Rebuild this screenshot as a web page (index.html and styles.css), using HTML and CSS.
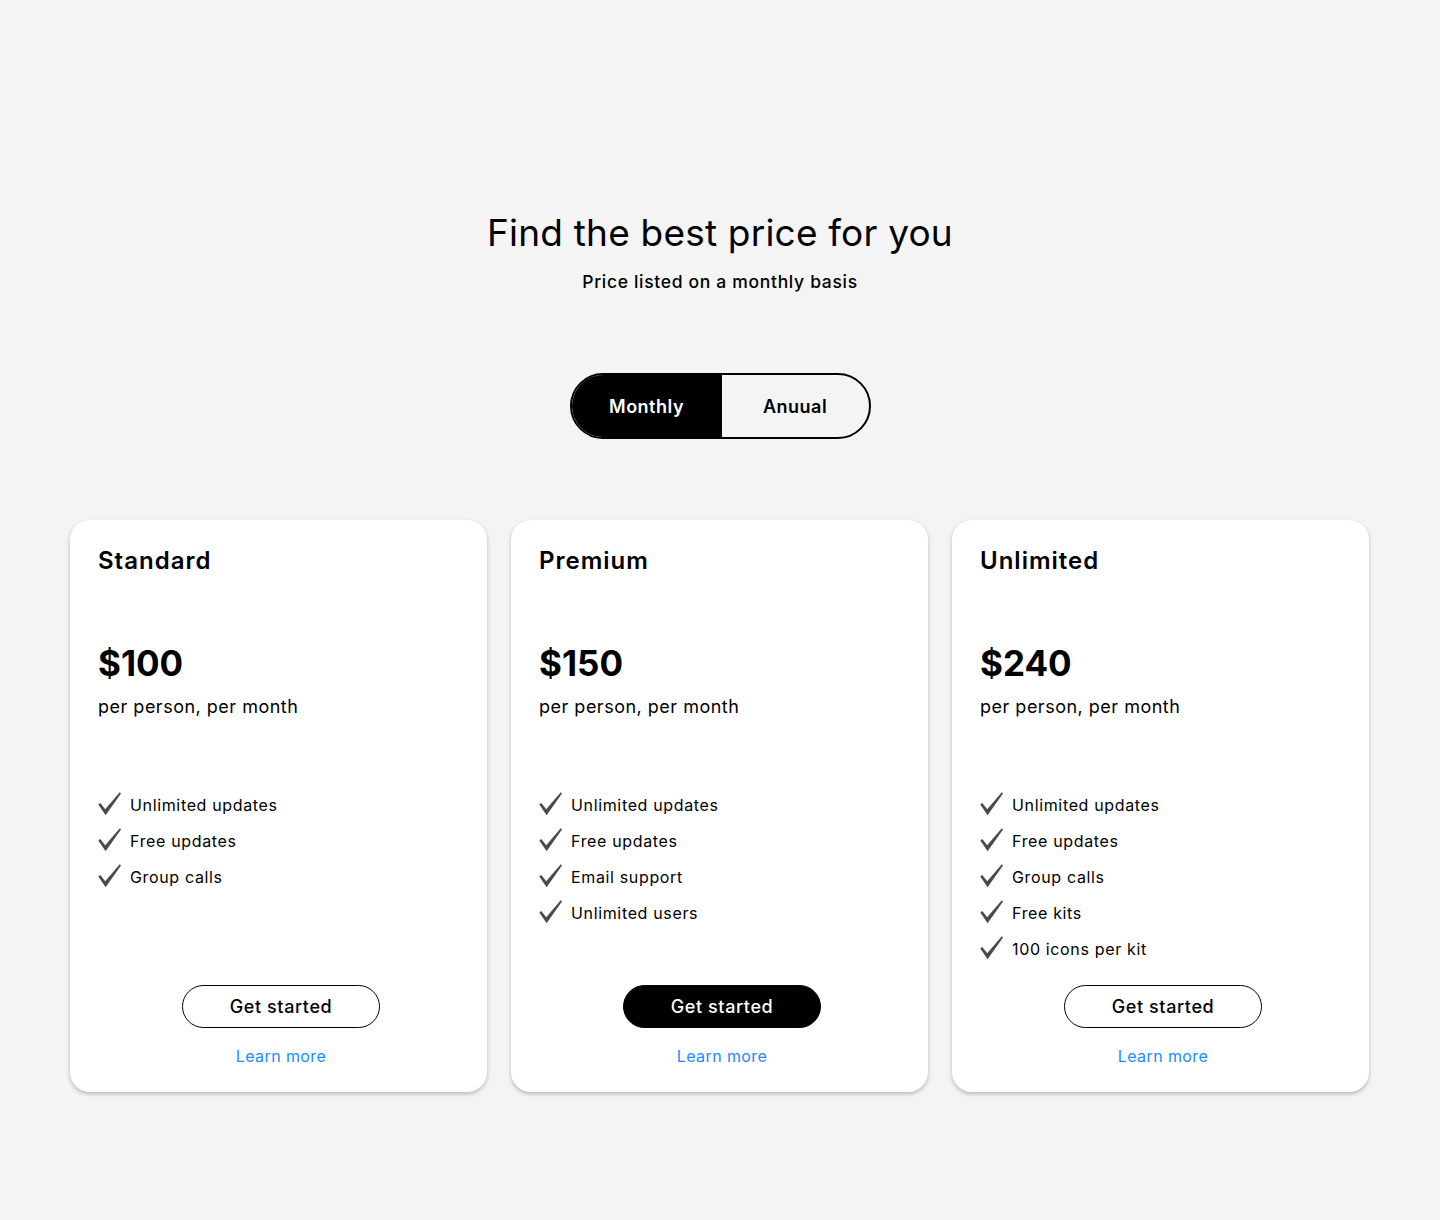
FILE: index.html
```html
<!DOCTYPE html>
<html lang="en">
<head>
<meta charset="utf-8">
<title>Pricing</title>
<link rel="stylesheet" href="styles.css">
</head>
<body>
<main class="page">
  <header class="intro">
    <h1 class="title">Find the best price for you</h1>
    <p class="subtitle">Price listed on a monthly basis</p>
  </header>

  <div class="toggle">
    <button class="toggle-btn active">Monthly</button>
    <button class="toggle-btn">Anuual</button>
  </div>

  <section class="cards">
    <article class="card">
      <h2 class="plan">Standard</h2>
      <div class="price">$100</div>
      <div class="per">per person, per month</div>
      <ul class="features">
        <li><svg class="check" viewBox="0 0 24 24"><path d="M0.3 12.6L2.3 11L7.2 17.2L21.8 0.3L23 1.5L7.6 23.2Z"/></svg>Unlimited updates</li>
        <li><svg class="check" viewBox="0 0 24 24"><path d="M0.3 12.6L2.3 11L7.2 17.2L21.8 0.3L23 1.5L7.6 23.2Z"/></svg>Free updates</li>
        <li><svg class="check" viewBox="0 0 24 24"><path d="M0.3 12.6L2.3 11L7.2 17.2L21.8 0.3L23 1.5L7.6 23.2Z"/></svg>Group calls</li>
      </ul>
      <div class="actions">
        <button class="cta">Get started</button>
        <a class="learn" href="#">Learn more</a>
      </div>
    </article>

    <article class="card">
      <h2 class="plan">Premium</h2>
      <div class="price">$150</div>
      <div class="per">per person, per month</div>
      <ul class="features">
        <li><svg class="check" viewBox="0 0 24 24"><path d="M0.3 12.6L2.3 11L7.2 17.2L21.8 0.3L23 1.5L7.6 23.2Z"/></svg>Unlimited updates</li>
        <li><svg class="check" viewBox="0 0 24 24"><path d="M0.3 12.6L2.3 11L7.2 17.2L21.8 0.3L23 1.5L7.6 23.2Z"/></svg>Free updates</li>
        <li><svg class="check" viewBox="0 0 24 24"><path d="M0.3 12.6L2.3 11L7.2 17.2L21.8 0.3L23 1.5L7.6 23.2Z"/></svg>Email support</li>
        <li><svg class="check" viewBox="0 0 24 24"><path d="M0.3 12.6L2.3 11L7.2 17.2L21.8 0.3L23 1.5L7.6 23.2Z"/></svg>Unlimited users</li>
      </ul>
      <div class="actions">
        <button class="cta dark">Get started</button>
        <a class="learn" href="#">Learn more</a>
      </div>
    </article>

    <article class="card">
      <h2 class="plan">Unlimited</h2>
      <div class="price">$240</div>
      <div class="per">per person, per month</div>
      <ul class="features">
        <li><svg class="check" viewBox="0 0 24 24"><path d="M0.3 12.6L2.3 11L7.2 17.2L21.8 0.3L23 1.5L7.6 23.2Z"/></svg>Unlimited updates</li>
        <li><svg class="check" viewBox="0 0 24 24"><path d="M0.3 12.6L2.3 11L7.2 17.2L21.8 0.3L23 1.5L7.6 23.2Z"/></svg>Free updates</li>
        <li><svg class="check" viewBox="0 0 24 24"><path d="M0.3 12.6L2.3 11L7.2 17.2L21.8 0.3L23 1.5L7.6 23.2Z"/></svg>Group calls</li>
        <li><svg class="check" viewBox="0 0 24 24"><path d="M0.3 12.6L2.3 11L7.2 17.2L21.8 0.3L23 1.5L7.6 23.2Z"/></svg>Free kits</li>
        <li><svg class="check" viewBox="0 0 24 24"><path d="M0.3 12.6L2.3 11L7.2 17.2L21.8 0.3L23 1.5L7.6 23.2Z"/></svg>100 icons per kit</li>
      </ul>
      <div class="actions">
        <button class="cta">Get started</button>
        <a class="learn" href="#">Learn more</a>
      </div>
    </article>
  </section>
</main>
</body>
</html>
```

FILE: styles.css
```css
* { box-sizing: border-box; }

html, body {
  margin: 0;
  padding: 0;
  background: #f4f4f4;
}

body {
  font-family: "Inter", "Noto Sans", "Liberation Sans", sans-serif;
  color: #000;
  width: 1440px;
  min-height: 1220px;
}

.page {
  display: flex;
  flex-direction: column;
  align-items: center;
  padding-top: 208px;
}

.intro {
  text-align: center;
}

.title {
  margin: 0;
  font-size: 37px;
  font-weight: 400;
  line-height: 50px;
  letter-spacing: 0.2px;
}

.subtitle {
  margin: 12px 0 0;
  font-size: 17.5px;
  font-weight: 500;
  line-height: 24px;
  letter-spacing: 0.68px;
}

.toggle {
  margin-top: 79px;
  display: flex;
  width: 301px;
  height: 66px;
  border: 2px solid #000;
  border-radius: 33px;
  overflow: hidden;
  background: #f4f4f4;
}

.toggle-btn {
  flex: none;
  width: 150px;
  border: 0;
  background: transparent;
  font-family: inherit;
  font-size: 18px;
  font-weight: 600;
  color: #000;
  padding: 0;
  letter-spacing: 0.5px;
  cursor: pointer;
}

.toggle-btn + .toggle-btn {
  flex: 1;
  width: auto;
}

.toggle-btn.active {
  background: #000;
  color: #fff;
}

.cards {
  margin-top: 81px;
  margin-right: 1px;
  display: grid;
  grid-template-columns: repeat(3, 417px);
  gap: 24px;
}

.card {
  background: #fff;
  border-radius: 20px;
  height: 572px;
  padding: 25px 23px 24px 28px;
  display: flex;
  flex-direction: column;
  box-shadow: 0 2px 4px rgba(0, 0, 0, 0.25);
}

.plan {
  margin: 0;
  font-size: 24px;
  font-weight: 600;
  line-height: 32px;
  letter-spacing: 1px;
}

.price {
  margin-top: 64px;
  font-size: 35px;
  font-weight: 700;
  line-height: 44px;
}

.per {
  margin-top: 10px;
  font-size: 18px;
  line-height: 24px;
  letter-spacing: 0.5px;
}

.features {
  list-style: none;
  margin: 74px 0 0;
  padding: 0;
  flex: 1;
  display: flex;
  flex-direction: column;
  gap: 12px;
}

.features li {
  display: flex;
  align-items: center;
  height: 24px;
  font-size: 16px;
  line-height: 24px;
  letter-spacing: 0.65px;
}

.check {
  width: 24px;
  height: 24px;
  fill: #4a4a4b;
  margin-right: 8px;
  margin-top: -2px;
  flex: none;
}

.actions {
  display: flex;
  flex-direction: column;
  align-items: center;
}

.cta {
  width: 198px;
  height: 43px;
  border: 1px solid #000;
  border-radius: 22px;
  background: #fff;
  font-family: inherit;
  font-size: 18px;
  font-weight: 500;
  letter-spacing: 0.6px;
  color: #000;
  cursor: pointer;
}

.cta.dark {
  background: #000;
  color: #fff;
}

.learn {
  margin-top: 16px;
  font-size: 16px;
  line-height: 24px;
  letter-spacing: 0.4px;
  color: #1a8cff;
  text-decoration: none;
}
```
